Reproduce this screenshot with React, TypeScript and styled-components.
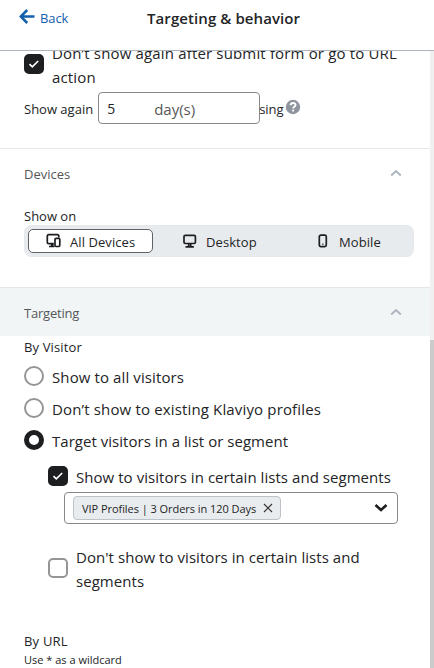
import React, { useState } from 'react';
import styled, { createGlobalStyle } from 'styled-components';

const GlobalStyle = createGlobalStyle`
  * { box-sizing: border-box; }
  body { margin: 0; background: #fff; }
  button { font: inherit; color: inherit; padding: 0; border: 0; background: none; cursor: pointer; }
`;

const Panel = styled.main`
  width: 434px;
  height: 668px;
  display: flex;
  flex-direction: column;
  overflow: hidden;
  color: #232426;
  background: #fff;
  font: 400 13px/20px 'Open Sans', 'Noto Sans', sans-serif;
  white-space: nowrap;
`;

const Header = styled.header`
  flex: none;
  height: 51px;
  display: grid;
  grid-template-columns: 147px 1fr;
  align-items: start;
  border-bottom: 1px solid #adb5bf;
`;

const BackButton = styled.button`
  display: flex;
  gap: 5px;
  margin: 8px 0 0 19px;
  color: #1560ad;
  letter-spacing: -0.1px;
`;

const Title = styled.h1`
  margin: 7px 0 0;
  font-size: 15px;
  font-weight: 600;
  line-height: 22px;
  letter-spacing: 0.08px;
`;

const Viewport = styled.div`
  flex: 1;
  min-height: 0;
  display: flex;
`;

const Content = styled.div`
  flex: 1;
  min-width: 0;
  overflow: hidden;
`;

const ScrollTrack = styled.div`
  width: 4px;
  padding-top: 289px;
  background: #f0f0f0;
`;

const ScrollThumb = styled.div`
  height: 100%;
  background: #cbcbcb;
`;

const Frequency = styled.section`
  height: 98px;
  border-bottom: 1px solid #e6e8ea;
  overflow: hidden;
`;

const Choice = styled.label<{ $top?: number; $spacing?: number }>`
  display: flex;
  gap: 8px;
  margin-top: ${p => p.$top ?? 0}px;
  font-size: 15px;
  line-height: 24px;
  letter-spacing: ${p => p.$spacing ?? 0.05}px;
`;

const ChoiceText = styled.span`
  margin: -1px 0 1px;
`;

const CheckMark = styled.span<{ $checked?: boolean; $top: number }>`
  flex: none;
  width: 20px;
  height: 20px;
  display: grid;
  place-items: center;
  margin-top: ${p => p.$top}px;
  border: 2px solid ${p => (p.$checked ? '#1d1e20' : '#949596')};
  border-radius: 5px;
  background: ${p => (p.$checked ? '#1d1e20' : '#fff')};
`;

const RadioMark = styled.span<{ $checked?: boolean }>`
  flex: none;
  width: 20px;
  height: 20px;
  border: ${p => (p.$checked ? '5px solid #1d1e20' : '2px solid #949596')};
  border-radius: 50%;
  background: #fff;
`;

const FrequencyChoice = styled.div`
  padding-left: 24px;
`;

const RepeatRow = styled.div`
  display: flex;
  align-items: center;
  height: 32px;
  margin-top: 2px;
  padding-left: 24px;
`;

const DaysField = styled.div`
  width: 162px;
  height: 32px;
  display: grid;
  grid-template-columns: 47px 1fr;
  align-items: center;
  margin-left: 5px;
  padding: 1px 0 0 8px;
  border: 1px solid #88898c;
  border-radius: 4px;
  font-size: 14px;
`;

const Unit = styled.span`
  color: #57585a;
  font-size: 15px;
`;

const RepeatText = styled.span<{ $tight?: boolean }>`
  padding-top: 2px;
  margin-left: ${p => (p.$tight ? -1 : 0)}px;
`;

const HelpIcon = styled.svg`
  margin: -2px 0 0 1px;
`;

const SectionHeader = styled.button<{ $tinted?: boolean }>`
  width: 100%;
  height: ${p => (p.$tinted ? 48 : 50)}px;
  display: flex;
  align-items: center;
  justify-content: space-between;
  padding: 0 28px 0 24px;
  color: #55565a;
  background: ${p => (p.$tinted ? '#f1f5f6' : '#fff')};
  letter-spacing: ${p => (p.$tinted ? -0.2 : 0)}px;

  span { padding-top: ${p => (p.$tinted ? 1 : 0)}px; }
  svg { margin-top: ${p => (p.$tinted ? 0 : -2)}px; }
`;

const Devices = styled.section`
  height: 139px;
  border-bottom: 1px solid #e4e7e9;
`;

const FieldLabel = styled.div<{ $top: number; $spacing?: number }>`
  margin: ${p => p.$top}px 0 0 24px;
  letter-spacing: ${p => p.$spacing ?? 0}px;
`;

const Segments = styled.div`
  width: 390px;
  height: 32px;
  display: grid;
  grid-template-columns: 125px 130px 1fr;
  align-items: center;
  margin: -1px 0 0 24px;
  padding: 0 4px;
  border-radius: 8px;
  background: #e8ebee;
  box-shadow: inset 0 0 2px #dfe4e7;
`;

const Segment = styled.button<{ $selected?: boolean; $gap: number; $inset: number }>`
  height: 24px;
  display: flex;
  align-items: center;
  gap: ${p => p.$gap}px;
  padding-left: ${p => p.$inset}px;
  border: 1px solid ${p => (p.$selected ? '#606266' : 'transparent')};
  border-radius: 5px;
  background: ${p => (p.$selected ? '#fff' : 'transparent')};
  letter-spacing: 0.08px;

  span { padding-top: 1px; }
`;

const RadioGroup = styled.div`
  display: grid;
  gap: 8px;
  margin: 9px 0 0 24px;
`;

const Nested = styled.div`
  padding-left: 48px;
`;

const SelectBox = styled.div`
  width: 334px;
  height: 32px;
  display: flex;
  align-items: center;
  justify-content: space-between;
  margin: 2px 0 0 64px;
  padding: 0 9px 0 8px;
  border: 1px solid #88898c;
  border-radius: 4px;
`;

const Tag = styled.div`
  width: 208px;
  height: 24px;
  display: flex;
  align-items: center;
  justify-content: space-between;
  padding: 1px 7px 0 8px;
  border: 1px solid #bcc2c8;
  border-radius: 4px;
  background: #e8ecef;
  font-size: 11px;
  letter-spacing: -0.05px;

  svg { margin-top: -1px; }
`;

const Hint = styled.div`
  margin: 1px 0 0 24px;
  font-size: 11px;
  line-height: 16px;
`;

const Tick = () => (
  <svg width="12" height="10" viewBox="0 0 12 10" fill="none">
    <path d="m1.5 5.2 2.8 2.7L10.2 2" stroke="#fff" strokeWidth="1.7" />
  </svg>
);

const Collapse = () => (
  <svg width="12" height="8" viewBox="0 0 12 8" fill="none">
    <path d="M1.2 6.5 6 2l4.8 4.5" stroke="#aeb5bf" strokeWidth="2" />
  </svg>
);

const AllDevicesIcon = () => (
  <svg width="16" height="16" viewBox="0 0 16 16" fill="none" stroke="#1d1e20" strokeWidth="1.7">
    <path d="M12.8 4.5V3q0-1.3-1.3-1.3H2.6Q1.3 1.7 1.3 3v6.5q0 1.2 1.3 1.2h5.2M5.7 10.7v2.5M3 13.5h5.5" />
    <rect x="9" y="5.3" width="4.8" height="8.2" rx="1.2" />
    <path d="M6.7 10.7v2.8" />
  </svg>
);

const DesktopIcon = () => (
  <svg width="14" height="14" viewBox="0 0 14 14" fill="none" stroke="#1d1e20" strokeWidth="1.7">
    <rect x="1" y="1.3" width="11.4" height="8.2" rx="1.3" />
    <path d="M5.7 9.5v3M7.7 9.5v3M2.5 12.8h8.4" />
  </svg>
);

const MobileIcon = () => (
  <svg width="10" height="14" viewBox="0 0 10 14" fill="none" stroke="#1d1e20" strokeWidth="1.7">
    <rect x="1.3" y="1.1" width="7" height="11.5" rx="1.6" />
    <path d="M4.2 10.1h1.3" strokeWidth="1.2" />
  </svg>
);

const visitorOptions = [
  { text: 'Show to all visitors', spacing: 0.105 },
  { text: 'Don’t show to existing Klaviyo profiles', spacing: 0.15 },
  { text: 'Target visitors in a list or segment', spacing: 0.03 },
];

export default function App() {
  const [visitor, setVisitor] = useState(2);
  const [device, setDevice] = useState(0);

  return (
    <>
      <GlobalStyle />
      <Panel>
        <Header>
          <BackButton>
            <svg width="16" height="17" viewBox="0 0 16 17" fill="none" stroke="#1560ad" strokeWidth="2.5">
              <path d="M15.5 8.5H2M8.2 2 1.8 8.5 8.2 15" />
            </svg>
            Back
          </BackButton>
          <Title>Targeting &amp; behavior</Title>
        </Header>
        <Viewport>
          <Content>
            <Frequency>
              <FrequencyChoice>
                <Choice $top={-9} $spacing={0.16}>
                  <CheckMark $checked $top={12}><Tick /></CheckMark>
                  <ChoiceText>Don’t show again after submit form or go to URL<br />action</ChoiceText>
                </Choice>
              </FrequencyChoice>
              <RepeatRow>
                <RepeatText>Show again</RepeatText>
                <DaysField><span>5</span><Unit>day(s)</Unit></DaysField>
                <RepeatText $tight>sing</RepeatText>
                <HelpIcon width="16" height="16" viewBox="0 0 16 16" fill="none">
                  <circle cx="8" cy="8" r="7.2" fill="#8f959e" />
                  <path d="M5.6 6.2c.2-3 5-2.9 4.9-.1 0 1.7-2.3 1.7-2.3 3.4" stroke="#fff" strokeWidth="2" />
                  <circle cx="8.1" cy="11.6" r="1.1" fill="#fff" />
                </HelpIcon>
              </RepeatRow>
            </Frequency>
            <Devices>
              <SectionHeader><span>Devices</span><Collapse /></SectionHeader>
              <FieldLabel $top={7}>Show on</FieldLabel>
              <Segments>
                <Segment $selected={device === 0} $gap={8} $inset={17} onClick={() => setDevice(0)}>
                  <AllDevicesIcon /><span>All Devices</span>
                </Segment>
                <Segment $selected={device === 1} $gap={9} $inset={29} onClick={() => setDevice(1)}>
                  <DesktopIcon /><span>Desktop</span>
                </Segment>
                <Segment $selected={device === 2} $gap={11} $inset={34} onClick={() => setDevice(2)}>
                  <MobileIcon /><span>Mobile</span>
                </Segment>
              </Segments>
            </Devices>
            <section>
              <SectionHeader $tinted><span>Targeting</span><Collapse /></SectionHeader>
              <FieldLabel $top={1} $spacing={0.14}>By Visitor</FieldLabel>
              <RadioGroup>
                {visitorOptions.map((option, index) => (
                  <Choice key={option.text} $spacing={option.spacing} onClick={() => setVisitor(index)}>
                    <RadioMark $checked={visitor === index} />
                    <ChoiceText>{option.text}</ChoiceText>
                  </Choice>
                ))}
              </RadioGroup>
              <Nested>
                <Choice $top={12}>
                  <CheckMark $checked $top={0}><Tick /></CheckMark>
                  <ChoiceText>Show to visitors in certain lists and segments</ChoiceText>
                </Choice>
              </Nested>
              <SelectBox>
                <Tag>
                  VIP Profiles | 3 Orders in 120 Days
                  <svg width="10" height="10" viewBox="0 0 10 10" stroke="#333" strokeWidth="1.1">
                    <path d="m1 1 8 8M9 1 1 9" />
                  </svg>
                </Tag>
                <svg width="14" height="10" viewBox="0 0 14 10" fill="none">
                  <path d="m1.5 2 5.5 5L12.5 2" stroke="#1d1e20" strokeWidth="2.6" />
                </svg>
              </SelectBox>
              <Nested>
                <Choice $top={22}>
                  <CheckMark $top={12} />
                  <ChoiceText>Don't show to visitors in certain lists and<br />segments</ChoiceText>
                </Choice>
              </Nested>
              <FieldLabel $top={37} $spacing={0.2}>By URL</FieldLabel>
              <Hint>Use * as a wildcard</Hint>
            </section>
          </Content>
          <ScrollTrack><ScrollThumb /></ScrollTrack>
        </Viewport>
      </Panel>
    </>
  );
}
